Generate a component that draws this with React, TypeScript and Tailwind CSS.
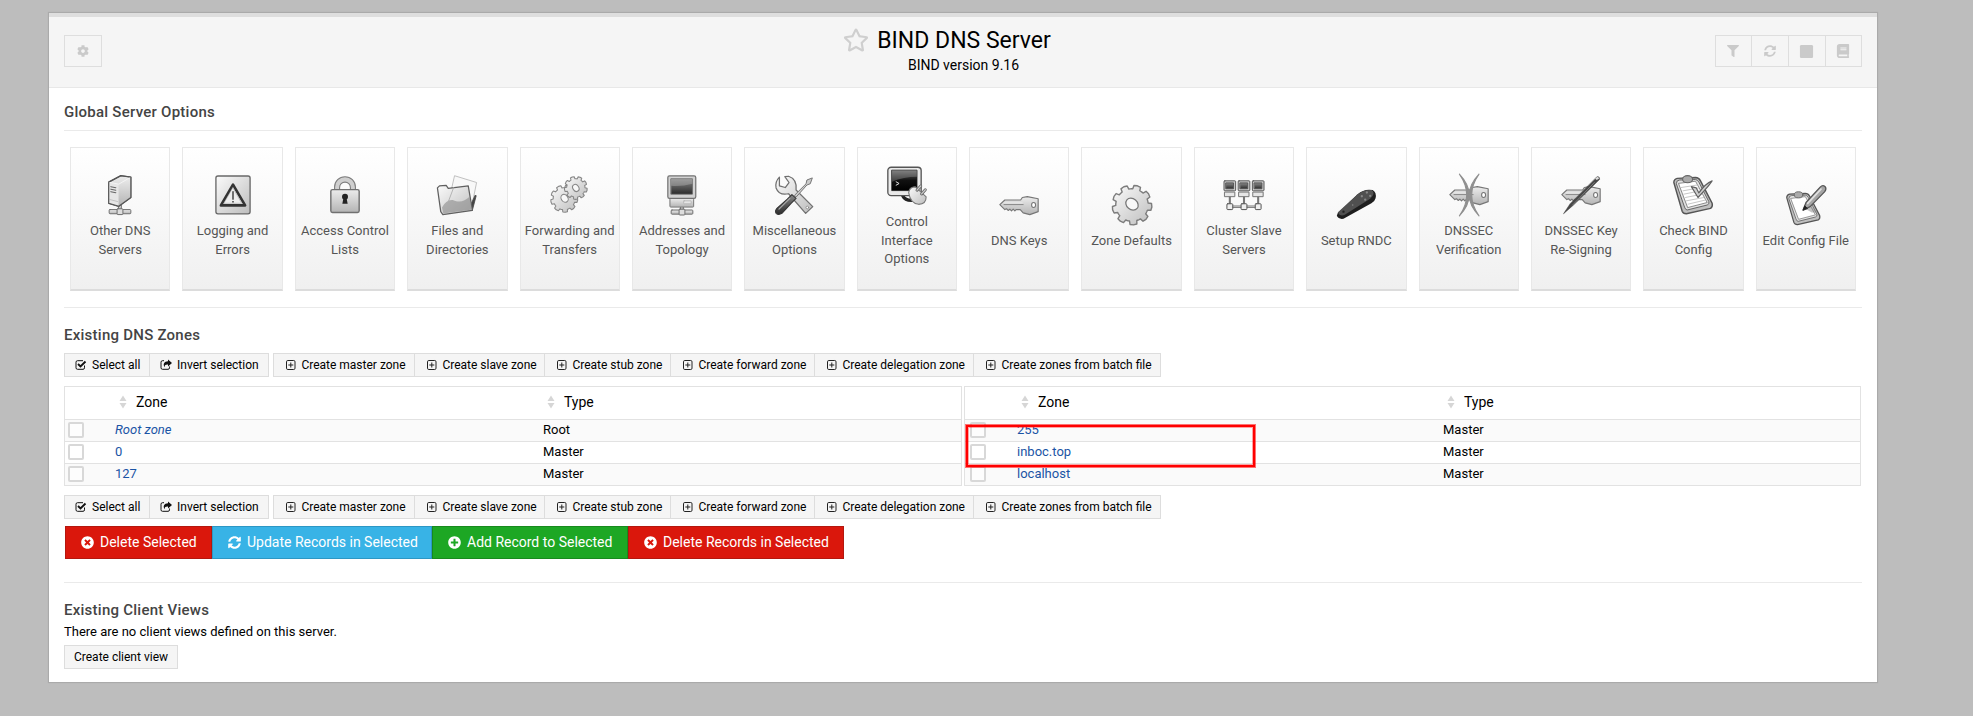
import React from "react";
import { FaCog, FaFilter, FaSquare, FaBook, FaTimesCircle, FaPlusCircle, FaRegStar, FaSyncAlt } from "react-icons/fa";

const Defs = () => (
  <svg className="absolute h-0 w-0" aria-hidden="true">
    <defs>
      <linearGradient id="lg" x1="0" y1="0" x2="1" y2="1"><stop offset="0" stopColor="#fbfbfb" /><stop offset="1" stopColor="#bdbdbd" /></linearGradient>
      <linearGradient id="md" x1="0" y1="0" x2="0" y2="1"><stop offset="0" stopColor="#ececec" /><stop offset="1" stopColor="#b4b4b4" /></linearGradient>
      <linearGradient id="dk" x1="0" y1="0" x2="0" y2="1"><stop offset="0" stopColor="#8a8a8a" /><stop offset="1" stopColor="#2b2b2b" /></linearGradient>
      <linearGradient id="sc" x1="0" y1="0" x2="0" y2="1"><stop offset="0" stopColor="#6d6d6d" /><stop offset=".5" stopColor="#111" /><stop offset="1" stopColor="#000" /></linearGradient>
    </defs>
  </svg>
);

const Svg = ({ children }: { children: React.ReactNode }) => (
  <svg viewBox="0 0 48 48" className="block h-10 w-10 shrink-0 overflow-visible" strokeLinejoin="round" strokeLinecap="round">{children}</svg>
);

function gear(cx: number, cy: number, r: number, ri: number, n: number, rot = 0) {
  const pts: string[] = [];
  for (let i = 0; i < n; i++) {
    const a = rot + (i * 2 * Math.PI) / n;
    const s = Math.PI / n;
    [[-0.9, ri], [-0.65, ri], [-0.5, r], [0, r * 1.02], [0.5, r], [0.65, ri], [0.9, ri]].forEach(([k, d]) => {
      pts.push(`${(cx + d * Math.cos(a + k * s)).toFixed(2)},${(cy + d * Math.sin(a + k * s)).toFixed(2)}`);
    });
  }
  return pts.join(" ");
}

const Network = ({ y = 40 }: { y?: number }) => (
  <g fill="url(#md)" stroke="#6f6f6f" strokeWidth="1.2">
    <path d={`M22.6 ${y - 5}h3v6h-3z`} />
    <rect x="11" y={y + 1} width="26" height="5" rx="1" />
    <rect x="20.5" y={y} width="7" height="7" rx="1" fill="#ddd" />
  </g>
);

const Server = () => (
  <Svg>
    <Network y={40.5} />
    <path d="M10.500 8.500 25 .8 37 2.500V27L22.500 37.500 10.500 34z" fill="url(#md)" stroke="#555" strokeWidth="1.6" />
    <path d="M10.500 8.500 22.500 11V37.500L10.500 34z" fill="#e6e6e6" />
    <path d="M22.500 11 37 2.500V27L22.500 37.500z" fill="url(#md)" />
    <path d="M13 14l6 1.200M13 17l6 1.200M13 20l6 1.200" stroke="#666" strokeWidth="1.300" fill="none" />
    <path d="M12 29.500l9 2.300" stroke="#bbb" fill="none" />
    <path d="M10.500 8.500 22.500 11 37 2.500" stroke="#f8f8f8" fill="none" />
    <path d="M10.500 8.500 25 .8 37 2.500V27L22.500 37.500 10.500 34z" fill="none" stroke="#555" strokeWidth="1.300" />
  </Svg>
);

const Warning = () => (
  <Svg>
    <rect x="3.500" y="1.200" width="41" height="45.500" rx="2.500" fill="url(#lg)" stroke="#686868" strokeWidth="1.600" />
    <path d="M24 11.500 38.500 36.500h-29z" fill="#fff" stroke="#333" strokeWidth="3.200" />
    <path d="M24 15.500 34.500 34h-21z" fill="#eee" stroke="#999" strokeWidth=".7" />
    <path d="M24 20v9" stroke="#222" strokeWidth="1.500" /><circle cx="24" cy="32.200" r="1" fill="#222" />
  </Svg>
);

const Lock = () => (
  <Svg>
    <path d="M11.500 19v-4.500a12.500 12.500 0 0 1 25 0V19h-6v-4a6.500 6.500 0 0 0-13 0v4z" fill="#cfcfcf" stroke="#7c7c7c" strokeWidth="1.300" />
    <rect x="7" y="17.500" width="34" height="27.500" rx="2" fill="url(#md)" stroke="#707070" strokeWidth="1.700" />
    <circle cx="24" cy="26" r="3.600" fill="#222" /><path d="M22.300 27h3.400l1.500 7.500h-6.400z" fill="#222" />
  </Svg>
);

const Folder = () => (
  <Svg>
    <path d="M21.500 1 47.500 9 41 41 14 34z" fill="#f8f8f8" stroke="#b4b4b4" />
    <path d="M38 41 46 24l1 1-4.500 17z" fill="#444" stroke="#444" />
    <path d="M.5 15.500 3 13l8-.5 2.500 3.500 24-3 5 29.500-35.500 5L4.500 44z" fill="url(#lg)" stroke="#606060" strokeWidth="1.500" />
    <path d="M6 39q5-10 13-9c9 4 14 1 20-4l3 15.500-34.500 4.700z" fill="#8b8b8b" opacity=".6" />
    <path d="M20 15l-6 16" stroke="#aaa" fill="none" />
  </Svg>
);

const Gears = () => (
  <Svg>
    <g fill="url(#lg)" stroke="#868686" strokeWidth="1.300">
      <polygon points={gear(17, 28.5, 16, 13.2, 9, 0.1)} />
      <ellipse cx="17.500" cy="28" rx="4" ry="5" fill="#f8f8f8" transform="rotate(-35 17.500 28)" />
      <polygon points={gear(31, 15.5, 13.5, 11, 9, 0.2)} />
      <ellipse cx="31" cy="15.500" rx="3.500" ry="4.500" fill="#f8f8f8" transform="rotate(-35 31 15.500)" />
    </g>
  </Svg>
);

const Computer = () => (
  <Svg>
    <Network y={41} />
    <rect x="9.500" y="28" width="28.500" height="10.500" rx="1" fill="url(#md)" stroke="#777" strokeWidth="1.200" />
    <rect x="26" y="31" width="9" height="3.500" rx=".5" fill="#e5e5e5" stroke="#aaa" strokeWidth=".8" />
    <rect x="7" y="1" width="33.500" height="27" rx="2" fill="#d2d2d2" stroke="#737373" strokeWidth="1.500" />
    <rect x="11" y="4.500" width="25.500" height="18.500" fill="url(#dk)" stroke="#666" />
    <path d="M11 4.500h25.500v6Q24 14 11 13z" fill="#bbb" opacity=".4" />
  </Svg>
);

const Tools = () => (
  <Svg>
    <path d="M6.500 2.500Q1 8 2.500 15.500 6 25 17.500 22.500L38 46 46.500 38 26.500 18Q28 5 17.500 1.500L13 2l5 7-4.500 6-7-2z" fill="url(#lg)" stroke="#707070" strokeWidth="1.500" />
    <circle cx="40" cy="39" r="1.600" fill="#fff" stroke="#888" />
    <path d="M25 24 38.500 10.500 39.500 6 46 3.500 43.500 10.500 39.500 12 27 26z" fill="#ccc" stroke="#777" strokeWidth="1.200" />
    <path d="M21.500 23.500 26.500 28 20.500 34 9.500 46Q5.500 48.500 2.500 46 .8 43 3.500 40L16 29z" fill="url(#dk)" stroke="#333" strokeWidth="1.300" />
    <path d="M19 28 6 41" stroke="#aaa" strokeWidth="1.500" />
  </Svg>
);

const Terminal = () => (
  <Svg>
    <path d="M19 36q3 6 13 5" fill="none" stroke="#222" strokeWidth="4" />
    <rect x="1" y="1.500" width="40" height="34" rx="4" fill="#eaeaea" stroke="#555" strokeWidth="1.600" />
    <rect x="6" y="5" width="30" height="24.500" fill="url(#sc)" stroke="#222" />
    <path d="M6 5h30v8Q20 13 6 19z" fill="#aaa" opacity=".35" />
    <path d="m11 19 3.500 2-3.500 2" stroke="#ddd" strokeWidth="1.200" fill="none" />
    <path d="M26 32Q27 25 34 25L47 37Q47 46 38 46 28 45 26 32z" fill="url(#lg)" stroke="#777" strokeWidth="1.300" />
    <path d="m36 29 4.500-5M41.500 33.500l4.500-5" stroke="#666" strokeWidth="3.500" /><path d="m36 29 4.500-5M41.500 33.500l4.500-5" stroke="#ccc" strokeWidth="1.500" />
  </Svg>
);

const KeyShape = () => (
  <g>
    <path d="M1 23.500 7 18h19l2-3 6-1L47 16.500V32l-10 3.500-8-2-3.500-4h-5l-1.500 1.500-2-2-2 2-2-2-2 1.500-2-2-2 1z" fill="url(#md)" stroke="#777" strokeWidth="1.400" />
    <path d="M6 23.500h23" stroke="#777" strokeWidth="1" /><path d="M6 21.500h22" stroke="#eee" />
    <ellipse cx="41.500" cy="24" rx="2.400" ry="3" fill="#fff" stroke="#777" strokeWidth="1.300" />
  </g>
);

const Key = () => <Svg><KeyShape /></Svg>;

const GearIcon = () => (
  <Svg>
    <polygon points={gear(24, 24, 23.5, 19.5, 9, 0.1)} fill="url(#lg)" stroke="#7d7d7d" strokeWidth="1.700" />
    <ellipse cx="24" cy="23" rx="6.500" ry="8" fill="#f8f8f8" stroke="#777" strokeWidth="1.500" transform="rotate(-50 24 23)" />
  </Svg>
);

const Cluster = () => (
  <Svg>
    <path d="M8 38h34" stroke="#777" strokeWidth="3" /><path d="M8 38h34" stroke="#ccc" strokeWidth="1" />
    {[0, 17, 34].map((x) => (
      <g key={x} stroke="#555" strokeWidth="1.200">
        <path d={`M${x + 7} 26v9`} stroke="#777" strokeWidth="2.500" />
        <rect x={x} y="7" width="14" height="12" rx="1" fill="#ccc" />
        <rect x={x + 2.5} y="9.500" width="9" height="7" fill="url(#dk)" />
        <rect x={x + 1} y="20.500" width="12" height="5.500" fill="#e6e6e6" stroke="#777" />
        <rect x={x + 3.5} y="34.500" width="7" height="7" rx="1" fill="#eee" />
      </g>
    ))}
  </Svg>
);

const Remote = () => (
  <Svg>
    <path d="M2 34 26 11Q34 4 44 6q5 3 3.500 10-1 4-5 6L9 40.500q-6 1-8-3.500z" fill="#1e1e1e" />
    <path d="M2 33 26 11Q34 5 43 6q5 4-2 10.500L10 36q-5 2-8-3z" fill="#505050" />
    <g fill="#858585"><circle cx="37" cy="9" r="1.400" /><circle cx="31" cy="13.500" r="1.400" /><circle cx="41" cy="13" r="1.400" /><circle cx="35" cy="17.500" r="1.400" /><circle cx="20" cy="24" r="1" /><circle cx="9" cy="32" r="1.400" fill="#222" /></g>
  </Svg>
);

const Verify = () => (
  <Svg>
    <KeyShape />
    <path d="M12.500-1Q36 24 12.500 49 30 24 12.500-1zM36-1Q12.500 24 36 49 18.500 24 36-1z" fill="#8f8f8f" stroke="#8f8f8f" strokeWidth="1.300" />
  </Svg>
);

const Sign = () => (
  <Svg>
    <KeyShape />
    <path d="M43.500 2q3-.5 3 3L15 36 3 46.500 11 34.500z" fill="#484848" stroke="#3b3b3b" strokeWidth=".6" />
    <path d="m43 6-2-1.500 3-2.500 2 2z" fill="#ddd" /><path d="M40 9 14 36" stroke="#888" />
  </Svg>
);

const Clipboard = ({ lines = false }: { lines?: boolean }) => (
  <g>
    <path d="M1 9Q1 5 5 4L27 3q4 0 6 4L47 34q1 4-2 6L16 46.500q-4 0-5-3z" fill="#bfbfbf" stroke="#555" strokeWidth="1.700" />
    <path d="M4 10Q4 6 8 6L27 5.500q2 0 4 3L43 32q1 3-2 4l-24 6q-2 0-3-3z" fill="#e2e2e2" stroke="#666" strokeWidth="1.200" />
    <path d="M7 10 27 7.500 41 33 18 39z" fill="#fff" stroke="#777" />
    {lines && <path d="m10 15 19-3M12 19l19-3.500M13 23l20-4M15 27l20-4M16 31l21-4M18 35l21-5" stroke="#c2c2c2" strokeWidth="1.100" />}
    <ellipse cx="17.500" cy="5" rx="6" ry="4.300" fill="#aaa" stroke="#666" strokeWidth="1.300" />
  </g>
);

const Check = () => (
  <Svg>
    <Clipboard lines />
    <path d="m22 14 6 1.500 3 6Q39 10 47 7q-2 4-17 20z" fill="#cfcfcf" stroke="#606060" strokeWidth="1.400" />
  </Svg>
);

const Edit = () => (
  <Svg>
    <g transform="translate(0 7.500) scale(.86)"><Clipboard /></g>
    <path d="m22 28 9 5 7 0-9-9z" fill="#888" opacity=".5" />
    <path d="M20.500 30 24 21 41 2.500Q44-.5 47 2q2 2.500-.5 6L29 26z" fill="#a5a5a5" stroke="#555" strokeWidth="1.500" />
    <path d="m20.500 30 2-5 3 3z" fill="#222" stroke="#222" /><path d="M26 22 42 5" stroke="#e0e0e0" strokeWidth="2" />
  </Svg>
);

const cards: [string, React.FC][] = [
  ["Other DNS Servers", Server], ["Logging and Errors", Warning], ["Access Control Lists", Lock], ["Files and Directories", Folder],
  ["Forwarding and Transfers", Gears], ["Addresses and Topology", Computer], ["Miscellaneous Options", Tools], ["Control Interface Options", Terminal],
  ["DNS Keys", Key], ["Zone Defaults", GearIcon], ["Cluster Slave Servers", Cluster], ["Setup RNDC", Remote],
  ["DNSSEC Verification", Verify], ["DNSSEC Key Re-Signing", Sign], ["Check BIND Config", Check], ["Edit Config File", Edit],
];

const CheckIcon = () => (
  <svg viewBox="0 0 12 12" className="h-3 w-3 shrink-0" fill="none" stroke="#111"><path d="M9.500 6.500v2.300a1.500 1.500 0 0 1-1.500 1.500H2.500A1.500 1.500 0 0 1 1 8.800V3.200A1.500 1.500 0 0 1 2.500 1.700H8" /><path d="m3 5 2.500 2.500L10.500 2.500" strokeWidth="1.900" /></svg>
);
const ShareIcon = () => (
  <svg viewBox="0 0 12 12" className="h-3 w-3 shrink-0" fill="none" stroke="#111"><path d="M9.500 7.500v1.300a1.500 1.500 0 0 1-1.500 1.500H2.500A1.500 1.500 0 0 1 1 8.800V3.200A1.500 1.500 0 0 1 2.500 1.700H4" /><path d="M8 .5 12 4 8 7.500V5.500C5.500 5.400 4.600 6 4.700 8.200 2.600 5.500 4 2.400 8 2.300z" fill="#111" stroke="none" /></svg>
);
const PlusIcon = () => (
  <svg viewBox="0 0 12 12" className="ml-px h-3 w-3 shrink-0" fill="none" stroke="#222"><rect x="1.500" y="1.500" width="8.500" height="9" rx="1.300" /><path d="M5.800 3.500v5M3.300 6h5" /></svg>
);

const bar: [string, string, React.FC][][] = [
  [["Select all", "w-[86px]", CheckIcon], ["Invert selection", "w-[120px]", ShareIcon]],
  [
    ["Create master zone", "w-[142px]", PlusIcon], ["Create slave zone", "w-[131px]", PlusIcon], ["Create stub zone", "w-[127px]", PlusIcon],
    ["Create forward zone", "w-[145px]", PlusIcon], ["Create delegation zone", "w-[160px]", PlusIcon], ["Create zones from batch file", "w-[188px]", PlusIcon],
  ],
];

const Toolbar = () => (
  <div className="flex gap-1">
    {bar.map((g, i) => (
      <div key={i} className="flex">
        {g.map(([t, w, I], j) => (
          <button key={t} className={`flex h-6 items-center gap-1 border border-[#ddd] bg-[#f5f5f5] pl-[10px] text-[12px] whitespace-nowrap text-black ${w} ${j ? "-ml-px" : ""}`}>
            <I /><span className={i ? "ml-[0.4px]" : "ml-px"}>{t}</span>
          </button>
        ))}
      </div>
    ))}
  </div>
);

const Sort = () => (
  <svg viewBox="0 0 8 14" className="h-[14px] w-2" fill="#d6d6d6"><path d="M4 .5 7.500 6h-7zM4 13.500 .5 8h7z" /></svg>
);

const Table = ({ rows, cols, box }: { rows: [string, string][]; cols: string; box: string }) => (
  <div className={`grid border border-[#e2e2e2] ${cols}`}>
    <div className="h-[32px]" />
    {["Zone", "Type"].map((h) => (
      <div key={h} className="flex h-[32px] items-center gap-[9px] pb-[2px] pl-[4px] text-[14px]"><Sort />{h}</div>
    ))}
    {rows.map(([z, t], i) => (
      <div key={z} className={`col-span-3 grid h-[22px] grid-cols-subgrid items-center border-t border-[#e2e2e2] pb-[2px] text-[13px] ${i % 2 ? "bg-white" : "bg-[#fafafa]"}`}>
        <span className={`h-4 w-4 rounded-[2px] border-2 border-[#d8d8d8] bg-white/60 ${box}`} />
        <a className={`leading-5 text-[#1a54a5] ${z === "Root zone" ? "italic" : ""}`}>{z}</a>
        <span className="leading-5">{t}</span>
      </div>
    ))}
  </div>
);

const big: [string, string, React.ReactNode][] = [
  ["Delete Selected", "w-[147px] bg-[#da170c] border-[#b4170e]", <FaTimesCircle size={13} />],
  ["Update Records in Selected", "w-[220px] bg-[#38b3e6] border-[#2d97c4]", <FaSyncAlt size={13} />],
  ["Add Record to Selected", "w-[196px] bg-[#1da724] border-[#188a1e]", <FaPlusCircle size={13} />],
  ["Delete Records in Selected", "w-[216px] bg-[#da170c] border-[#b4170e]", <FaTimesCircle size={13} />],
];

const headBtn = "flex h-8 items-center justify-center border border-[#dedede] text-[#cacaca]";
const heading = "text-[15px] font-medium tracking-[0.25px] text-[#444]";

export default function App() {
  return (
    <div className="h-[716px] w-full overflow-hidden bg-[#bdbdbd] pt-[13px] pl-[49px] font-[Roboto,sans-serif] text-black">
      <Defs />
      <main className="h-[669px] w-[1828px] bg-white shadow-[0_0_1px_1px_#aaaaaa]">
        <header className="flex h-[75px] justify-between border-t-4 border-b border-t-[#dedede] border-b-[#e8e8e8] bg-[#f5f5f5] px-[15px]">
          <div className={`${headBtn} mt-[18px] w-[38px]`}><FaCog size={12} /></div>
          <div className="ml-[77px] flex flex-col items-center pt-[9px]">
            <h1 className="flex items-center gap-[8px] text-[23px] leading-[30px]"><FaRegStar size={26} className="-mt-[2px] text-[#cfcfcf]" />BIND DNS Server</h1>
            <div className="-mt-px ml-[33px] text-[14px] leading-5">BIND version 9.16</div>
          </div>
          <div className="mt-[18px] flex">
            <div className={`${headBtn} w-[37px] pr-px`}><FaFilter size={12} /></div>
            <div className={`${headBtn} -ml-px w-[38px] pr-px`}><FaSyncAlt size={12} /></div>
            <div className={`${headBtn} -ml-px w-[38px] pr-px`}><FaSquare size={15} /></div>
            <div className={`${headBtn} -ml-px w-[37px] pr-px pb-px`}><FaBook size={14} /></div>
          </div>
        </header>
        <div className="px-[15px]">
          <h2 className={`flex h-[43px] items-center border-b border-[#eaeaea] pt-[7px] ${heading}`}>Global Server Options</h2>
          <section className="grid h-[177px] grid-cols-16 border-b border-[#eaeaea] pt-4">
            {cards.map(([t, I]) => (
              <div key={t} className="px-1.5">
                <div className="flex h-36 flex-col items-center justify-center gap-[7px] border border-b-2 border-[#e8e8e8] border-b-[#dcdcdc] bg-linear-to-b from-white to-[#f0f0f0] pb-[2px] text-center text-[13px] leading-[18.57px] text-[#555]">
                  <I /><span className="px-[3px]">{t}</span>
                </div>
              </div>
            ))}
          </section>
          <h2 className={`flex h-[45px] items-center pt-[9px] ${heading}`}>Existing DNS Zones</h2>
          <Toolbar />
          <div className="relative my-[9px] flex gap-[2px]">
            <div className="w-[898px]"><Table cols="grid-cols-[50px_428px_1fr]" box="ml-[3px]" rows={[["Root zone", "Root"], ["0", "Master"], ["127", "Master"]]} /></div>
            <div className="w-[897px]"><Table cols="grid-cols-[52px_426px_1fr]" box="ml-[5px]" rows={[["255", "Master"], ["inboc.top", "Master"], ["localhost", "Master"]]} /></div>
            <div className="absolute top-[39px] left-[902px] h-[42px] w-[289px] border-2 border-[#ff0000] shadow-[0_0_0_1px_rgba(255,0,0,0.55),inset_0_0_0_1px_rgba(255,0,0,0.35)]" />
          </div>
          <Toolbar />
          <div className="mt-[7px] ml-px flex">
            {big.map(([t, c, icon]) => (
              <button key={t} className={`flex h-[33px] items-center gap-[6px] border pl-[15px] text-[14px] whitespace-nowrap text-white ${c}`}>{icon}{t}</button>
            ))}
          </div>
          <div className="mt-[23px] border-t border-[#eaeaea] pt-[17px]">
            <h2 className={`leading-5 ${heading}`}>Existing Client Views</h2>
            <p className="mt-[2px] text-[13px] leading-5">There are no client views defined on this server.</p>
            <button className="mt-[3px] h-6 w-[114px] border border-[#ddd] bg-[#f5f5f5] text-[12px]">Create client view</button>
          </div>
        </div>
      </main>
    </div>
  );
}
